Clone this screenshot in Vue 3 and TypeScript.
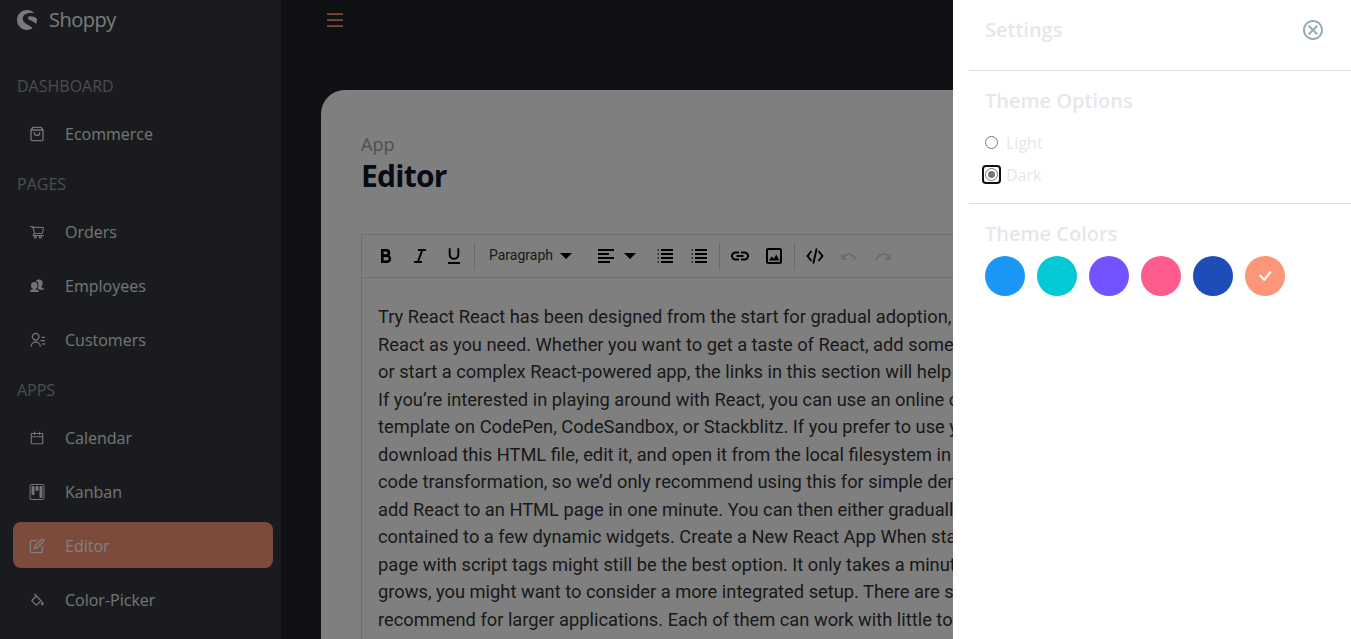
<script setup lang="ts">
interface NavLink { name: string; icon: string }
interface NavGroup { title: string; links: NavLink[] }

const groups: NavGroup[] = [
  { title: 'Dashboard', links: [{ name: 'Ecommerce', icon: 'bag' }] },
  {
    title: 'Pages',
    links: [
      { name: 'Orders', icon: 'cart' },
      { name: 'Employees', icon: 'people' },
      { name: 'Customers', icon: 'contact' },
    ],
  },
  {
    title: 'Apps',
    links: [
      { name: 'Calendar', icon: 'calendar' },
      { name: 'Kanban', icon: 'kanban' },
      { name: 'Editor', icon: 'edit' },
      { name: 'Color-Picker', icon: 'fill' },
    ],
  },
]
const active = 'Editor'

const lines: string[] = [
  'Try React React has been designed from the start for gradual adoption, and',
  'React as you need. Whether you want to get a taste of React, add some inter',
  'or start a complex React-powered app, the links in this section will help you',
  'If you’re interested in playing around with React, you can use an online code',
  'template on CodePen, CodeSandbox, or Stackblitz. If you prefer to use your',
  'download this HTML file, edit it, and open it from the local filesystem in your',
  'code transformation, so we’d only recommend using this for simple demos',
  'add React to an HTML page in one minute. You can then either gradually',
  'contained to a few dynamic widgets. Create a New React App When starting',
  'page with script tags might still be the best option. It only takes a minute to',
  'grows, you might want to consider a more integrated setup. There are several',
  'recommend for larger applications. Each of them can work with little to no',
]

const colors: string[] = ['#1A97F5', '#03C9D7', '#7352FF', '#FF5C8E', '#1E4DB7', '#FB9678']
const selected = '#FB9678'
</script>

<template>
  <div class="app">
    <aside class="sidebar">
      <div class="brand">
        <svg width="20" height="20" viewBox="0 0 24 24" fill="currentColor">
          <path d="M19.6 2.6C17.4.9 14.8 0 12 0 5.4 0 0 5.4 0 12s5.400 12 12 12c2.400 0 4.700-.7 6.700-2-1.700-2.200-4.500-3.500-7.100-4.900C8.700 15.500 6.900 13.600 6.900 10.300c0-4 3.500-6.800 9-6.800 1.800 0 3 .2 3.700.3.400.1.400-.8 0-1.200z" />
          <path d="M23.900 10.600c-2-2-5-3-7.600-3-1.900 0-3.300.7-3.300 2 0 2.700 7 3.100 9.900 7.300.8-1.700 1.200-4.200 1-6.300z" />
        </svg>
        <span>Shoppy</span>
      </div>
      <div v-for="g in groups" :key="g.title" class="group">
        <p class="group-title">{{ g.title }}</p>
        <a v-for="l in g.links" :key="l.name" class="link" :class="{ active: l.name === active }">
          <svg v-if="l.icon === 'bag'" class="line" viewBox="0 0 24 24"><path d="M6 2L3 6v14a2 2 0 0 0 2 2h14a2 2 0 0 0 2-2V6l-3-4zM3 6h18M16 10a4 4 0 0 1-8 0" /></svg>
          <svg v-else-if="l.icon === 'cart'" viewBox="0 0 1024 1024"><path d="M922.9 701.9H327.4l29.9-60.9 496.8-.9c16.800 0 31.200-12 34.200-28.600l68.800-385.100c1.800-10.100-.9-20.500-7.500-28.400a34.990 34.990 0 0 0-26.600-12.500l-632-2.100-5.400-25.400c-3.400-16.200-18-28-34.600-28H96.500a35.300 35.300 0 1 0 0 70.600h125.900L246 312.800l58.100 281.300-74.800 122.100a34.960 34.960 0 0 0-3 36.800c6 11.900 18.100 19.400 31.500 19.400h62.800a102.430 102.430 0 0 0-20.600 61.700c0 56.600 46 102.600 102.600 102.600s102.600-46 102.600-102.600c0-22.300-7.400-44-20.600-61.700h161.100a102.430 102.430 0 0 0-20.600 61.700c0 56.600 46 102.600 102.600 102.600s102.600-46 102.600-102.600c0-22.300-7.400-44-20.600-61.700H923c19.400 0 35.300-15.800 35.300-35.300a35.420 35.420 0 0 0-35.400-35.200zM305.700 253l575.800 1.900-56.400 315.800-452.300.8L305.700 253zm96.900 612.700c-17.400 0-31.600-14.200-31.600-31.600s14.200-31.600 31.600-31.600 31.600 14.200 31.600 31.600a31.600 31.600 0 0 1-31.600 31.600zm325.100 0c-17.400 0-31.600-14.200-31.600-31.600s14.200-31.600 31.600-31.600 31.600 14.200 31.600 31.600a31.600 31.600 0 0 1-31.600 31.600z" /></svg>
          <svg v-else-if="l.icon === 'people'" viewBox="0 0 16 16">
            <path d="M1 14c0-1.500.8-2.100 2.500-2.500.8-.2.800-.6.400-1.100H3.100C2.300 9.600 2 8.500 2 7.300 2 5 3.300 3.900 5.300 3.900s3.300 1.100 3.300 3.400c0 1.200-.3 2.300-1.100 3.100h-.8c-.4.5-.4.900.4 1.100 1.700.4 2.700 1 2.700 2.500z" />
            <path d="M7 3C7.700 2 8.800 1.600 10.200 1.600c2.200 0 3.500 1.300 3.500 3.500 0 1.400-.5 2.300-1.300 3.100-.4.5-.4 1 .4 1.200 1.400.4 2.200 1 2.200 2.400h-4.700c-.4-.6-1-.9-1.700-1.200.7-1.100 1-2.300.9-3.800C9.400 5.200 8.700 3.700 7 3z" />
          </svg>
          <svg v-else-if="l.icon === 'contact'" viewBox="0 0 24 24"><path d="M19 7h5v2h-5V7zm-2 5h7v2h-7v-2zm3 5h4v2h-4v-2zM2 22a8 8 0 1 1 16 0h-2a6 6 0 1 0-12 0H2zm8-9c-3.315 0-6-2.685-6-6s2.685-6 6-6 6 2.685 6 6-2.685 6-6 6zm0-2c2.210 0 4-1.790 4-4s-1.790-4-4-4-4 1.790-4 4 1.790 4 4 4z" /></svg>
          <svg v-else-if="l.icon === 'calendar'" viewBox="0 0 1024 1024"><path d="M880 184H712v-64c0-4.400-3.600-8-8-8h-56c-4.400 0-8 3.600-8 8v64H384v-64c0-4.400-3.600-8-8-8h-56c-4.400 0-8 3.600-8 8v64H144c-17.700 0-32 14.300-32 32v664c0 17.700 14.300 32 32 32h736c17.700 0 32-14.300 32-32V216c0-17.700-14.300-32-32-32zm-40 656H184V460h656v380zM184 392V256h128v48c0 4.400 3.600 8 8 8h56c4.400 0 8-3.600 8-8v-48h256v48c0 4.400 3.600 8 8 8h56c4.400 0 8-3.600 8-8v-48h128v136H184z" /></svg>
          <svg v-else-if="l.icon === 'kanban'" viewBox="0 0 16 16"><path fill-rule="evenodd" d="M13.500 1h-11a1 1 0 0 0-1 1v12a1 1 0 0 0 1 1h11a1 1 0 0 0 1-1V2a1 1 0 0 0-1-1zm-11-1a2 2 0 0 0-2 2v12a2 2 0 0 0 2 2h11a2 2 0 0 0 2-2V2a2 2 0 0 0-2-2h-11z" /><path d="M6.500 3a1 1 0 0 1 1-1h1a1 1 0 0 1 1 1v3a1 1 0 0 1-1 1h-1a1 1 0 0 1-1-1V3zm-4 0a1 1 0 0 1 1-1h1a1 1 0 0 1 1 1v7a1 1 0 0 1-1 1h-1a1 1 0 0 1-1-1V3zm8 0a1 1 0 0 1 1-1h1a1 1 0 0 1 1 1v10a1 1 0 0 1-1 1h-1a1 1 0 0 1-1-1V3z" /></svg>
          <svg v-else-if="l.icon === 'edit'" class="line" viewBox="0 0 24 24"><path d="M11 4H4a2 2 0 0 0-2 2v14a2 2 0 0 0 2 2h14a2 2 0 0 0 2-2v-7M18.500 2.500a2.121 2.121 0 0 1 3 3L12 15l-4 1 1-4 9.500-9.500z" /></svg>
          <svg v-else viewBox="0 0 24 24"><path d="M20 14c-.092.064-2 2.083-2 3.500 0 1.494.949 2.448 2 2.500.906.044 2-.891 2-2.500 0-1.500-1.908-3.436-2-3.500zM9.586 20c.378.378.88.586 1.414.586s1.036-.208 1.414-.586l7-7-.707-.707L11 4.586 8.707 2.293 7.293 3.707 9.586 6 4 11.586c-.378.378-.586.88-.586 1.414s.208 1.036.586 1.414L9.586 20zM11 7.414 16.586 13 11 18.586 5.414 13 11 7.414z" /></svg>
          <span>{{ l.name }}</span>
        </a>
      </div>
    </aside>

    <main class="main">
      <nav class="topbar">
        <svg width="20" height="20" viewBox="0 0 20 20" fill="currentColor"><path d="M2 3.200h16v1.700H2zM2 9.200h16v1.700H2zM2 15.200h16v1.700H2z" /></svg>
      </nav>
      <section class="page">
        <p class="category">App</p>
        <h1 class="title">Editor</h1>
        <div class="editor">
          <div class="toolbar">
            <button class="tool"><svg viewBox="0 0 20 20"><path fill="none" stroke="currentColor" stroke-width="2.600" d="M6.300 4.300h4a2.600 2.600 0 0 1 0 5.200h-4zM6.300 9.800h4.600a2.900 2.900 0 0 1 0 5.900H6.300z" /></svg></button>
            <button class="tool"><svg viewBox="0 0 20 20"><path fill="none" stroke="currentColor" stroke-width="2" d="M8 4h8M4 16h8M12.300 4 7.800 16" /></svg></button>
            <button class="tool"><svg viewBox="0 0 20 20"><path fill="none" stroke="currentColor" stroke-width="1.900" d="M5.700 2.300v6.200a4.300 4.300 0 0 0 8.600 0V2.300M4 17h12" /></svg></button>
            <i class="sep"></i>
            <button class="tool drop"><span>Paragraph</span><i class="caret"></i></button>
            <button class="tool align"><svg viewBox="0 0 20 20"><path d="M2 3h16v2H2zM2 7h11v2H2zM2 11h16v2H2zM2 15h12v2H2z" /></svg><i class="caret"></i></button>
            <button v-for="n in 2" :key="n" class="tool"><svg viewBox="0 0 20 20"><path d="M6 3h12v2H6zM6 7h12v2H6zM6 11h12v2H6zM6 15h12v2H6z" /><path opacity=".6" d="M2.500 3h1.500v2H2.500zM2.500 7h1.500v2H2.500zM2.500 11h1.500v2H2.500zM2.500 15h1.500v2H2.500z" /></svg></button>
            <i class="sep"></i>
            <button class="tool"><svg viewBox="0 0 20 20"><path fill="none" stroke="currentColor" stroke-width="2" d="M9 6.500H5.500a3.500 3.500 0 0 0 0 7H9M11 6.500h3.500a3.500 3.500 0 0 1 0 7H11M6.500 10h7" /></svg></button>
            <button class="tool"><svg viewBox="0 0 20 20"><rect x="3" y="3" width="14" height="14" rx="1" fill="none" stroke="currentColor" stroke-width="2" /><path d="M5 14.500l2.800-4.300 1.900 2.500 2.600-4.200 3.200 6z" /></svg></button>
            <i class="sep"></i>
            <button class="tool"><svg viewBox="0 0 20 20"><path fill="none" stroke="currentColor" stroke-width="1.900" d="M6.500 5 2.500 10l4 5M13.500 5l4 5-4 5M11.700 2.500 8.300 17.500" /></svg></button>
            <button class="tool off"><svg viewBox="0 0 20 20"><path fill="none" stroke="currentColor" stroke-width="1.900" d="M4 11.500c3-5 10-4.500 12.500 2" /><path d="M2 7v7h6.500z" /></svg></button>
            <button class="tool off"><svg viewBox="0 0 20 20"><path fill="none" stroke="currentColor" stroke-width="1.900" d="M16 11.500c-3-5-10-4.500-12.500 2" /><path d="M18 7v7h-6.500z" /></svg></button>
          </div>
          <div class="content">
            <p v-for="(t, i) in lines" :key="i">{{ t }}</p>
          </div>
        </div>
      </section>
    </main>

    <div class="overlay">
      <div class="settings">
        <header class="settings-head">
          <p class="heading">Settings</p>
          <svg width="24" height="24" viewBox="0 0 24 24" fill="currentColor"><path d="M12 2C6.470 2 2 6.470 2 12s4.470 10 10 10 10-4.470 10-10S17.530 2 12 2zm0 18c-4.410 0-8-3.590-8-8s3.590-8 8-8 8 3.590 8 8-3.590 8-8 8zm3.590-13L12 10.590 8.410 7 7 8.410 10.590 12 7 15.590 8.410 17 12 13.410 15.590 17 17 15.590 13.410 12 17 8.410z" /></svg>
        </header>
        <div class="block options">
          <p class="heading">Theme Options</p>
          <label class="option"><i class="radio"></i><span>Light</span></label>
          <label class="option"><i class="radio checked"></i><span>Dark</span></label>
        </div>
        <div class="block">
          <p class="heading">Theme Colors</p>
          <div class="swatches">
            <button v-for="c in colors" :key="c" class="swatch" :style="{ backgroundColor: c }">
              <svg v-if="c === selected" width="24" height="24" viewBox="0 0 16 16" fill="#fff"><path d="M10.970 4.970a.75.75 0 0 1 1.070 1.050l-3.990 4.990a.75.75 0 0 1-1.080.02L4.324 8.384a.75.75 0 1 1 1.060-1.060l2.094 2.093 3.473-4.425a.267.267 0 0 1 .02-.022z" /></svg>
            </button>
          </div>
        </div>
      </div>
    </div>
  </div>
</template>

<style>
html, body { margin: 0; overflow: hidden; }
</style>

<style scoped>
* { box-sizing: border-box; }
p, h1 { margin: 0; }
button { border: 0; padding: 0; background: none; color: inherit; font: inherit; }
.app { position: relative; display: flex; width: 1351px; height: 639px; overflow: hidden; background: #20232a; font-family: "Open Sans", sans-serif; font-size: 16px; line-height: 24px; }
.sidebar { flex: none; width: 281px; height: 639px; overflow: hidden; background: #33373e; padding-left: 13px; }
.brand { display: flex; align-items: center; gap: 12px; height: 40px; padding-left: 4px; font-size: 20px; font-weight: 500; letter-spacing: -0.5px; color: #f3f4f6; }
.group-title { height: 24px; margin: 0 0 12px 4px; text-transform: uppercase; color: #98999e; }
.group { padding-top: 8px; }
.brand + .group { padding-top: 34px; }
.link { display: flex; align-items: center; gap: 20px; width: 260px; height: 46px; margin-bottom: 8px; padding: 2px 0 0 16px; border-radius: 8px; color: #e5e7eb; font-weight: 500; }
.link svg { width: 16px; height: 16px; fill: currentColor; }
.link svg.line { fill: none; stroke: currentColor; stroke-width: 2; stroke-linecap: round; stroke-linejoin: round; }
.link.active { background: #fb9678; color: #fff; }
.main { flex: 1; min-width: 0; display: flex; flex-direction: column; }
.topbar { flex: none; height: 90px; padding: 10px 0 0 44px; color: #fb9678; }
.topbar svg { display: block; }
.page { flex: 1; min-height: 0; margin-left: 40px; padding: 40px 40px 0; border-radius: 24px 0 0 0; background: #fff; }
.category { font-size: 18px; line-height: 28px; color: #9c9fa8; }
.title { font-size: 30px; line-height: 36px; font-weight: 700; letter-spacing: -0.75px; color: #0f172a; }
.editor { height: 500px; margin-top: 40px; border: 1px solid #dcdcdc; font-family: Roboto, sans-serif; overflow: hidden; }
.toolbar { display: flex; align-items: center; height: 43px; padding-left: 7px; border-bottom: 1px solid #dcdcdc; color: #000; }
.tool { flex: none; display: flex; align-items: center; justify-content: center; width: 34px; height: 34px; }
.tool svg { width: 20px; height: 20px; fill: currentColor; }
.tool.off { color: #d8d8d8; }
.sep { flex: none; width: 1px; height: 27px; margin: 0 3px; background: #d6d6d6; }
.drop { width: 104px; justify-content: flex-start; gap: 7px; padding-left: 11px; font-size: 14px; color: #333; }
.drop span { margin-bottom: 2px; }
.caret { width: 0; height: 0; border: 6px solid transparent; border-top: 6px solid #000; border-bottom: 0; }
.align { width: 59px; margin-left: 7px; justify-content: flex-start; padding-left: 7px; gap: 8px; }
.content { padding: 25px 16px 0; font-size: 18.3px; line-height: 27.55px; color: #333; white-space: nowrap; }
.overlay { position: absolute; inset: 0; display: flex; justify-content: flex-end; background: rgba(0, 0, 0, .5); }
.settings { width: 398px; height: 100%; padding-left: 16px; background: #fff; color: #e5e7eb; }
.settings-head { display: flex; align-items: center; justify-content: space-between; height: 60px; padding: 0 26px 0 16px; }
.settings-head svg { color: #99abb4; }
.block { padding: 16px 0 0 16px; border-top: 1px solid #e0e0e0; }
.options { height: 133px; margin-top: 10px; }
.heading { font-size: 20px; line-height: 28px; font-weight: 600; }
.option { display: flex; align-items: center; gap: 8px; height: 24px; margin-top: 8px; }
.options .heading + .option { margin-top: 16px; }
.radio { flex: none; display: flex; align-items: center; justify-content: center; width: 13px; height: 13px; margin-bottom: 2px; border: 1px solid #767676; border-radius: 50%; background: #fff; }
.radio.checked::after { content: ""; width: 7px; height: 7px; border-radius: 50%; background: #767676; }
.radio.checked { position: relative; }
.radio.checked::before { content: ""; position: absolute; inset: -4px; border: 2px solid #101010; border-radius: 4px; }
.swatches { display: flex; gap: 12px; padding-top: 8px; }
.swatch { display: flex; align-items: center; justify-content: center; width: 40px; height: 40px; border-radius: 50%; }
</style>
